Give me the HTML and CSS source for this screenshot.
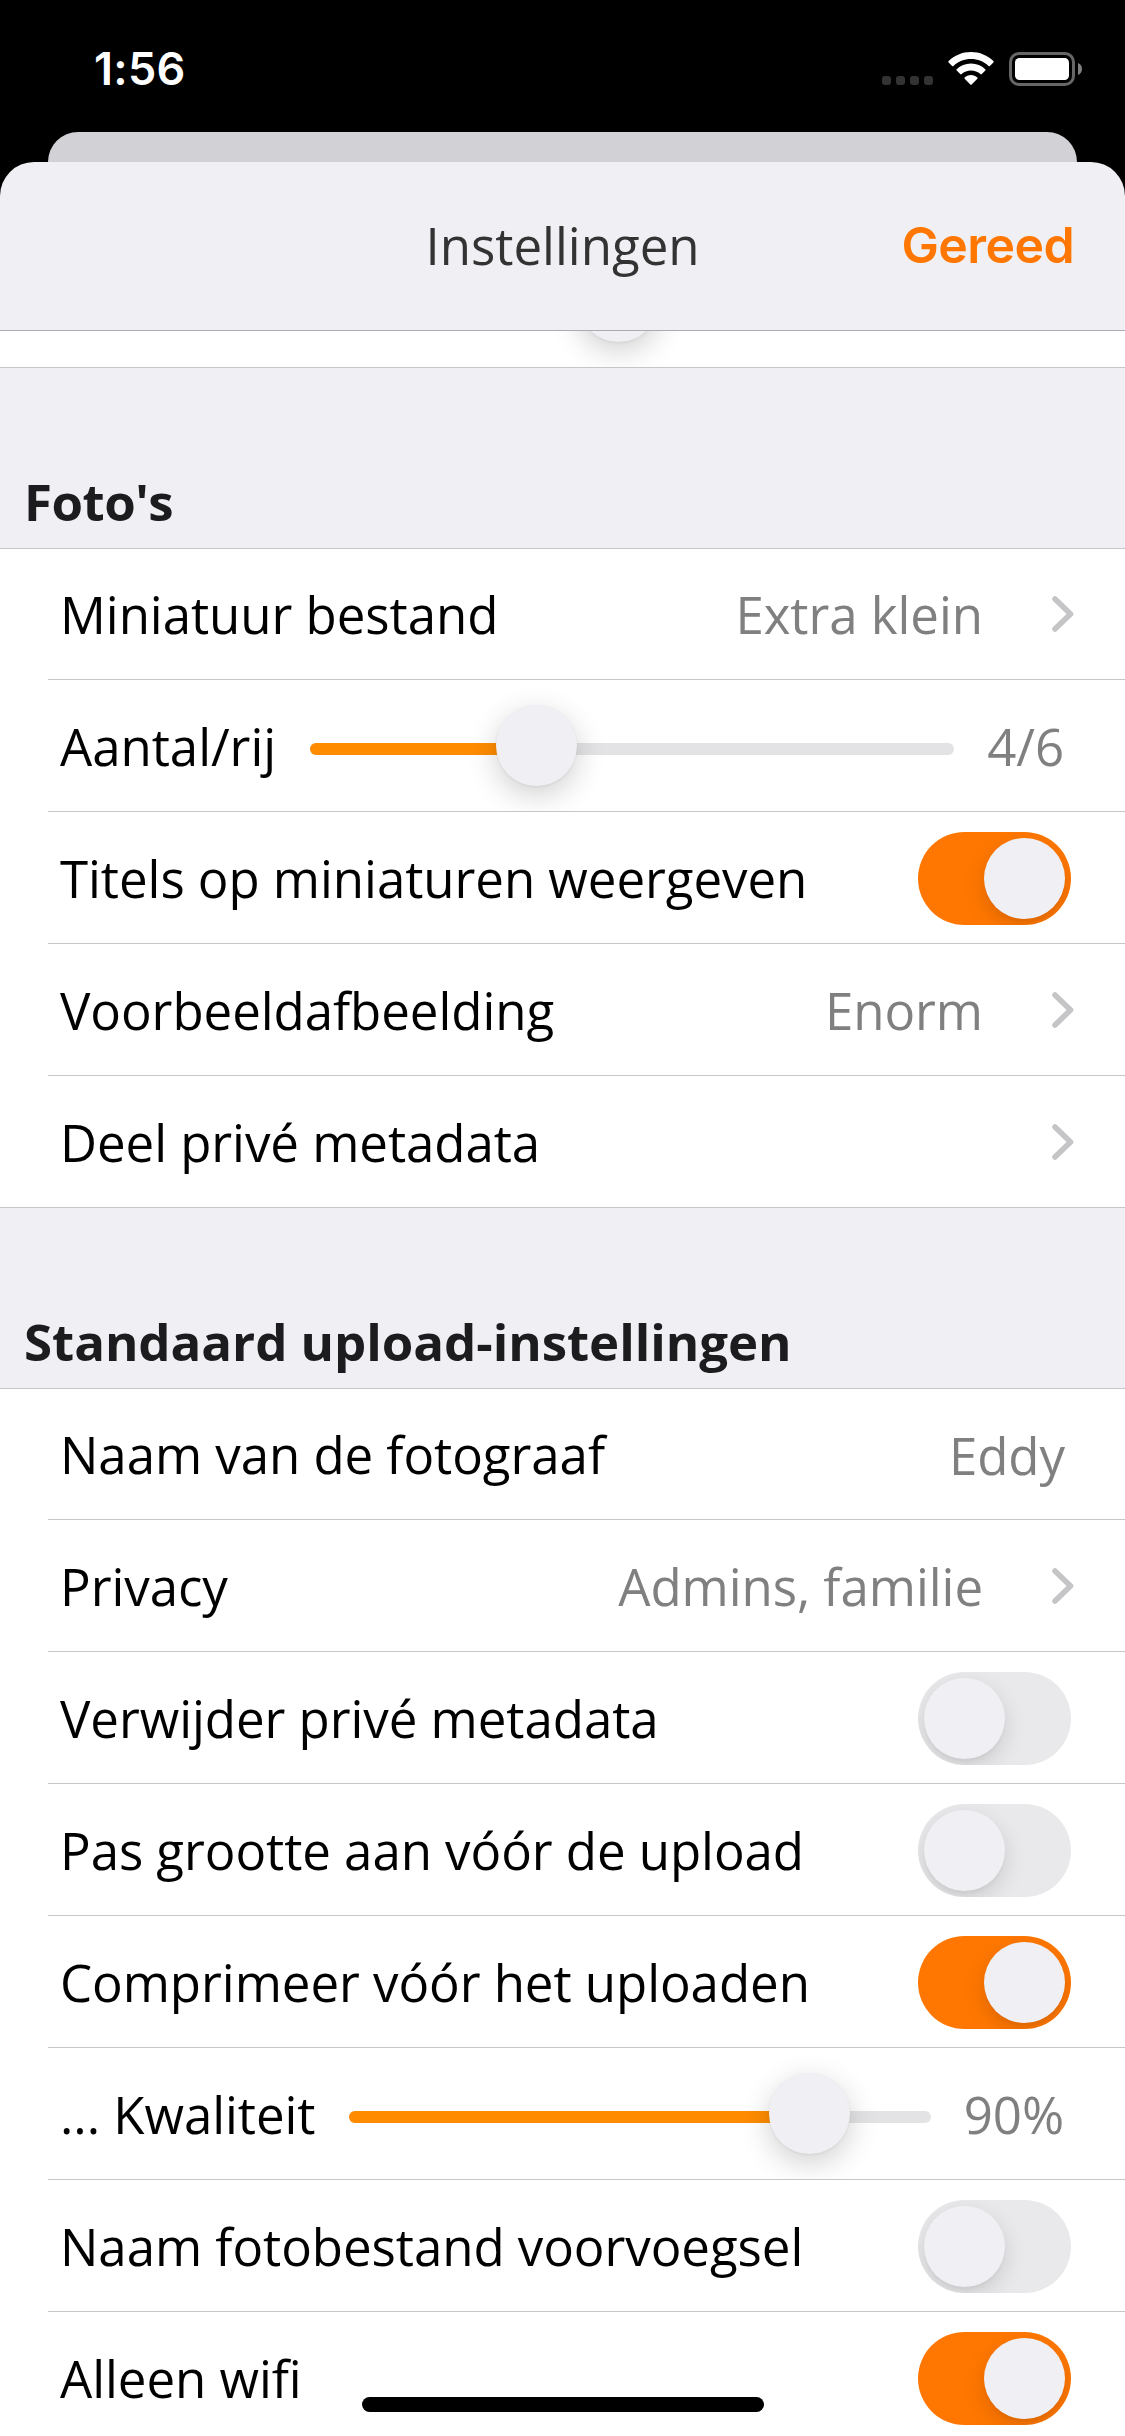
FILE: index.html
```html
<!DOCTYPE html>
<html lang="nl">
<head>
<meta charset="utf-8">
<title>Instellingen</title>
<link rel="stylesheet" href="styles.css">
</head>
<body>
<svg width="0" height="0" class="defs"><defs>
  <symbol id="chevron" viewBox="0 0 22 36"><path d="M3 3 L18.5 18 L3 33" fill="none" stroke="#c5c5c7" stroke-width="5.6" stroke-linecap="round" stroke-linejoin="round"/></symbol>
</defs></svg>
<div class="screen">
  <header class="status">
    <span class="time">1:56</span>
    <div class="status-icons">
      <div class="cell"><i></i><i></i><i></i><i></i></div>
      <svg class="wifi" width="46" height="34" viewBox="0 0 46 34">
        <g fill="#fff">
          <path d="M23 0 C31.7 0 39.6 3.400 45.400 9 Q46 9.700 45.400 10.400 L41.900 13.900 Q41.200 14.500 40.500 13.900 C35.900 9.600 29.700 7.100 23 7.100 C16.300 7.100 10.100 9.600 5.500 13.900 Q4.800 14.500 4.100 13.900 L.6 10.400 Q0 9.700 .6 9 C6.400 3.400 14.300 0 23 0Z"/>
          <path d="M23 11.600 C28.600 11.600 33.600 13.700 37.300 17.200 Q38 17.900 37.300 18.600 L33.800 22.100 Q33.100 22.700 32.400 22.100 C29.900 19.900 26.600 18.600 23 18.600 C19.400 18.600 16.100 19.900 13.600 22.100 Q12.900 22.700 12.200 22.100 L8.700 18.600 Q8 17.900 8.700 17.200 C12.400 13.700 17.400 11.600 23 11.600Z"/>
          <path d="M23 23 C25.500 23 27.700 23.900 29.300 25.400 Q30 26.100 29.300 26.800 L23.700 32.500 Q23 33.200 22.300 32.500 L16.700 26.800 Q16 26.100 16.700 25.400 C18.300 23.900 20.500 23 23 23Z"/>
        </g>
      </svg>
      <svg class="battery" width="74" height="34" viewBox="0 0 74 34">
        <rect x="1.500" y="1.500" width="63" height="31" rx="8.500" fill="none" stroke="#666" stroke-width="3"/>
        <rect x="6" y="6" width="54" height="22" rx="4.500" fill="#fff"/>
        <path d="M69 11 C71.500 12 73 14.300 73 17 S71.500 22 69 23Z" fill="#808080"/>
      </svg>
    </div>
  </header>
  <div class="back-sheet"></div>
  <main class="sheet">
    <nav class="navbar">
      <h1>Instellingen</h1>
      <a class="done">Gereed</a>
    </nav>
    <div class="scrolled-row"><div class="peek-thumb"></div></div>

    <h2 class="tight">Foto's</h2>
    <section>
      <div class="row"><span class="label">Miniatuur bestand</span><span class="value">Extra klein</span><svg class="chevron"><use href="#chevron"/></svg></div>
      <div class="row has-slider"><span class="label">Aantal/rij</span><div class="slider columns"><div class="track"><div class="fill" style="width:35.200%"></div></div><div class="thumb" style="left:186px"></div></div><span class="value end">4/6</span></div>
      <div class="row"><span class="label">Titels op miniaturen weergeven</span><div class="switch on"><b></b></div></div>
      <div class="row"><span class="label">Voorbeeldafbeelding</span><span class="value">Enorm</span><svg class="chevron"><use href="#chevron"/></svg></div>
      <div class="row"><span class="label">Deel privé metadata</span><svg class="chevron"><use href="#chevron"/></svg></div>
    </section>

    <h2>Standaard upload-instellingen</h2>
    <section>
      <div class="row"><span class="label">Naam van de fotograaf</span><span class="value end name">Eddy</span></div>
      <div class="row"><span class="label">Privacy</span><span class="value">Admins, familie</span><svg class="chevron"><use href="#chevron"/></svg></div>
      <div class="row"><span class="label">Verwijder privé metadata</span><div class="switch"><b></b></div></div>
      <div class="row"><span class="label">Pas grootte aan vóór de upload</span><div class="switch"><b></b></div></div>
      <div class="row"><span class="label">Comprimeer vóór het uploaden</span><div class="switch on"><b></b></div></div>
      <div class="row has-slider"><span class="label">... Kwaliteit</span><div class="slider quality"><div class="track"><div class="fill" style="width:79%"></div></div><div class="thumb" style="left:420px"></div></div><span class="value end">90%</span></div>
      <div class="row"><span class="label">Naam fotobestand voorvoegsel</span><div class="switch"><b></b></div></div>
      <div class="row"><span class="label">Alleen wifi</span><div class="switch on"><b></b></div></div>
    </section>
  </main>
  <div class="home-indicator"></div>
</div>
</body>
</html>
```
FILE: styles.css
```css
* { box-sizing: border-box; }
body { margin: 0; background: #000; }
.defs { display: block; position: absolute; }
.screen {
  position: relative;
  width: 1125px;
  height: 2436px;
  overflow: hidden;
  background: #000;
  font: 51px/70px "Open Sans", "Noto Sans", sans-serif;
  color: #000;
}

/* Status bar */
.status {
  display: flex;
  justify-content: space-between;
  height: 132px;
  padding: 0 42px 0 94px;
}
.time {
  margin-top: 42px;
  font: 600 45px/54px Inter, sans-serif;
  letter-spacing: .3px;
  color: #fff;
}
.status-icons { display: flex; margin-top: 52px; height: 34px; }
.cell { display: flex; gap: 5px; align-items: flex-end; padding-bottom: 1px; margin-right: 15px; }
.cell i { width: 9px; height: 9px; border-radius: 3px; background: #333; }
.wifi { margin-right: 15px; }

/* Stacked sheets */
.back-sheet {
  height: 30px;
  margin: 0 48px;
  border-radius: 30px 30px 0 0;
  background: #d2d1d6;
}
.sheet {
  border-radius: 34px 34px 0 0;
  background: #efeff4;
  overflow: hidden;
  height: 2274px;
}
.navbar {
  display: grid;
  grid-template-columns: 1fr auto 1fr;
  align-items: center;
  height: 169px;
  padding: 0 51px 3px;
  border-bottom: 1px solid #acacb0;
}
h1 { grid-column: 2; margin: 0; font-size: 51px; font-weight: 400; color: #333; }
.done {
  justify-self: end;
  font: 600 50px/70px Inter, sans-serif;
  letter-spacing: -.6px;
  color: #ff7700;
}
.scrolled-row {
  position: relative;
  height: 37px;
  overflow: hidden;
  background: #fff;
  border-bottom: 1px solid #c6c6c8;
}
.thumb, .peek-thumb {
  position: absolute;
  width: 81px;
  height: 81px;
  border-radius: 50%;
  background: #efeff4;
  box-shadow: 0 1px 3px rgba(0, 0, 0, .06), 0 9px 30px rgba(0, 0, 0, .19);
}
.peek-thumb { left: 578px; top: -70px; }

/* Grouped list */
h2 {
  height: 180px;
  margin: 0;
  padding: 98px 24px 0;
  font-size: 51px;
  font-weight: 700;
  letter-spacing: -.05px;
  color: #1c1c1e;
}
.tight { letter-spacing: -.5px; }
section { background: #fff; border-top: 1px solid #c6c6c8; }
.row {
  display: flex;
  align-items: center;
  height: 132px;
  margin-left: 48px;
  padding: 2px 51px 0 12px;
  border-bottom: 1px solid #c6c6c8;
}
.row:first-child { margin-top: -1px; }
.row:last-child { margin-left: 0; padding-left: 60px; }
.has-slider { overflow: hidden; }
.label { white-space: nowrap; padding-bottom: 2px; letter-spacing: -.05px; }
.value { margin-left: auto; margin-right: 69px; padding-bottom: 2px; color: #808080; white-space: nowrap; letter-spacing: -.05px; }
.value.end { margin-right: 10px; }
.value.name { padding-bottom: 0; margin-right: 9px; }
.chevron { flex: none; width: 22px; height: 36px; margin-bottom: 1px; }
.label + .chevron { margin-left: auto; }

.switch {
  flex: none;
  display: flex;
  width: 153px;
  height: 93px;
  margin: 0 3px 0 auto;
  padding: 6px;
  border-radius: 47px;
  overflow: hidden;
  background: #e9e9eb;
}
.switch b {
  width: 81px;
  height: 81px;
  border-radius: 50%;
  background: #efeff4;
  box-shadow: 0 8px 22px rgba(0, 0, 0, .13), 0 3px 3px rgba(0, 0, 0, .03);
}
.switch.on { justify-content: flex-end; background: #ff7700; }

.slider { position: relative; flex: none; height: 81px; margin-bottom: 2px; padding-top: 38px; }
.columns { width: 644px; margin-left: 34px; }
.quality { width: 582px; margin-left: 33px; }
.track { height: 12px; border-radius: 6px; overflow: hidden; background: #e3e3e5; }
.fill { height: 12px; background: #ff8c00; }
.thumb { top: 0; }

.home-indicator {
  position: absolute;
  left: 362px;
  bottom: 24px;
  width: 402px;
  height: 15px;
  border-radius: 8px;
  background: #000;
}
```
